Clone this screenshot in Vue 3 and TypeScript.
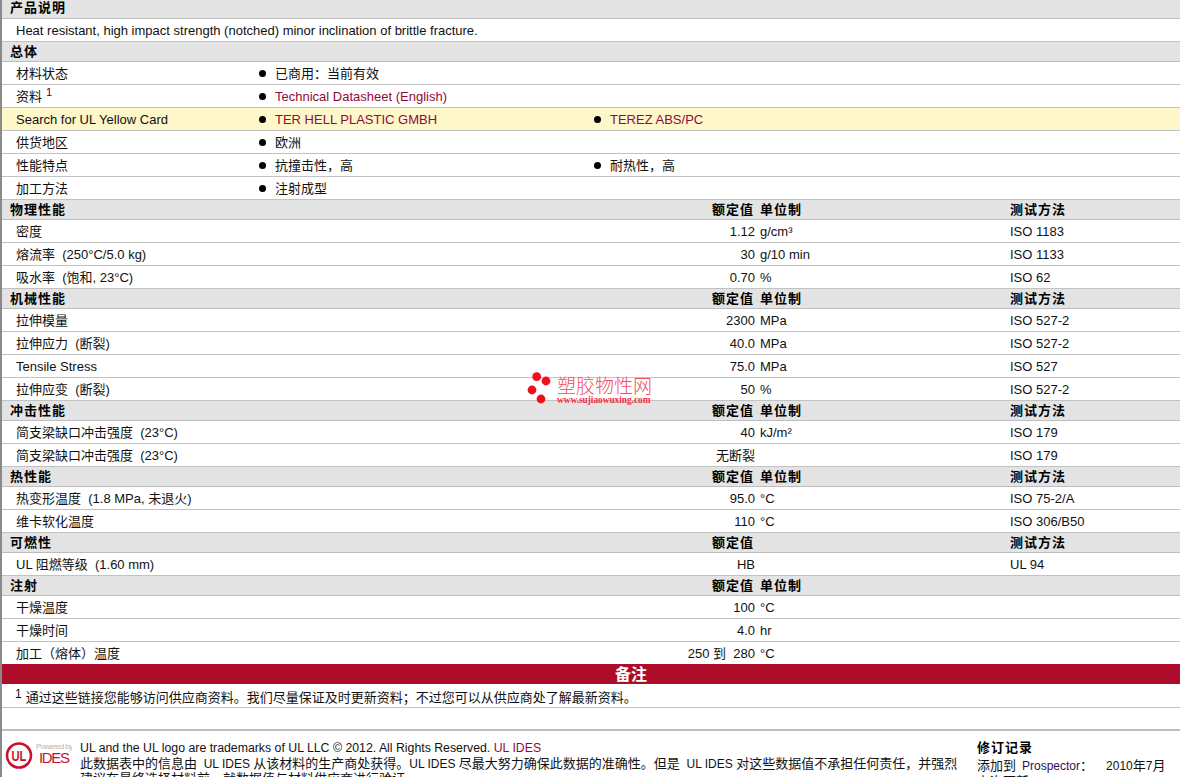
<script setup lang="ts">
interface Seg { t: string; zh: boolean }
interface Prop { label: string; value: string; unit?: string; method?: string }
interface Section { title: string; unit: boolean; method: boolean; rows: Prop[] }
interface Info { label: string; sup?: boolean; items: { text: string; link?: boolean }[]; hl?: boolean }

function seg(s: string): Seg[] {
  const out: Seg[] = []
  const re = /[\u3000-\u303f\u4e00-\u9fff\uff00-\uffef]+|[^\u3000-\u303f\u4e00-\u9fff\uff00-\uffef]+/g
  for (const m of s.match(re) ?? []) {
    out.push({ t: m, zh: /[\u3000-\u303f\u4e00-\u9fff\uff00-\uffef]/.test(m) })
  }
  return out
}

const infos: Info[] = [
  { label: '材料状态', items: [{ text: '已商用：当前有效' }] },
  { label: '资料', sup: true, items: [{ text: 'Technical Datasheet (English)', link: true }] },
  { label: 'Search for UL Yellow Card', hl: true, items: [{ text: 'TER HELL PLASTIC GMBH', link: true }, { text: 'TEREZ ABS/PC', link: true }] },
  { label: '供货地区', items: [{ text: '欧洲' }] },
  { label: '性能特点', items: [{ text: '抗撞击性，高' }, { text: '耐热性，高' }] },
  { label: '加工方法', items: [{ text: '注射成型' }] }
]

const sections: Section[] = [
  { title: '物理性能', unit: true, method: true, rows: [
    { label: '密度', value: '1.12', unit: 'g/cm³', method: 'ISO 1183' },
    { label: '熔流率  (250°C/5.0 kg)', value: '30', unit: 'g/10 min', method: 'ISO 1133' },
    { label: '吸水率  (饱和, 23°C)', value: '0.70', unit: '%', method: 'ISO 62' }
  ] },
  { title: '机械性能', unit: true, method: true, rows: [
    { label: '拉伸模量', value: '2300', unit: 'MPa', method: 'ISO 527-2' },
    { label: '拉伸应力  (断裂)', value: '40.0', unit: 'MPa', method: 'ISO 527-2' },
    { label: 'Tensile Stress', value: '75.0', unit: 'MPa', method: 'ISO 527' },
    { label: '拉伸应变  (断裂)', value: '50', unit: '%', method: 'ISO 527-2' }
  ] },
  { title: '冲击性能', unit: true, method: true, rows: [
    { label: '简支梁缺口冲击强度  (23°C)', value: '40', unit: 'kJ/m²', method: 'ISO 179' },
    { label: '简支梁缺口冲击强度  (23°C)', value: '无断裂', method: 'ISO 179' }
  ] },
  { title: '热性能', unit: true, method: true, rows: [
    { label: '热变形温度  (1.8 MPa, 未退火)', value: '95.0', unit: '°C', method: 'ISO 75-2/A' },
    { label: '维卡软化温度', value: '110', unit: '°C', method: 'ISO 306/B50' }
  ] },
  { title: '可燃性', unit: false, method: true, rows: [
    { label: 'UL 阻燃等级  (1.60 mm)', value: 'HB', method: 'UL 94' }
  ] },
  { title: '注射', unit: true, method: false, rows: [
    { label: '干燥温度', value: '100', unit: '°C' },
    { label: '干燥时间', value: '4.0', unit: 'hr' },
    { label: '加工（熔体）温度', value: '250 到  280', unit: '°C' }
  ] }
]

const footLine2 = '此数据表中的信息由  UL IDES 从该材料的生产商处获得。UL IDES 尽最大努力确保此数据的准确性。但是  UL IDES 对这些数据值不承担任何责任，并强烈'
const footLine3 = '建议在最终选择材料前，就数据值与材料供应商进行验证。'
const note = '通过这些链接您能够访问供应商资料。我们尽量保证及时更新资料；不过您可以从供应商处了解最新资料。'
</script>

<template>
  <div class="page">
    <div class="head first"><span class="b">产品说明</span></div>
    <div class="row desc"><span>Heat resistant, high impact strength (notched) minor inclination of brittle fracture.</span></div>

    <div class="head"><span class="b">总体</span></div>
    <div v-for="info in infos" :key="info.label" class="row info" :class="{ hl: info.hl }">
      <div class="info-label">{{ info.label }}<sup v-if="info.sup" class="ref">1</sup></div>
      <div v-for="item in info.items" :key="item.text" class="info-item">
        <i class="dot"></i>
        <span :class="{ link: item.link }">{{ item.text }}</span>
      </div>
    </div>

    <template v-for="sec in sections" :key="sec.title">
      <div class="head prop">
        <span class="b">{{ sec.title }}</span>
        <span class="b val">额定值</span>
        <span class="b unit">{{ sec.unit ? '单位制' : '' }}</span>
        <span class="b">{{ sec.method ? '测试方法' : '' }}</span>
      </div>
      <div v-for="(r, ri) in sec.rows" :key="ri" class="row prop">
        <span>{{ r.label }}</span>
        <span class="val">{{ r.value }}</span>
        <span class="unit">{{ r.unit }}</span>
        <span>{{ r.method }}</span>
      </div>
    </template>

    <div class="band">备注</div>
    <div class="row note"><div><sup class="note-ref">1</sup>{{ note }}</div></div>
    <div class="row empty"></div>

    <footer class="foot">
      <svg class="logo" width="70" height="30" viewBox="0 0 70 30">
        <circle cx="17" cy="13.5" r="12" fill="none" stroke="#c8102e" stroke-width="2.6" />
        <text x="17" y="19" text-anchor="middle" font-family="Liberation Sans" font-size="15" font-weight="700" fill="#c8102e" textLength="15" lengthAdjust="spacingAndGlyphs">UL</text>
        <text x="34" y="7" font-family="Liberation Sans" font-size="8" fill="#b5b5b5" textLength="37">Powered by</text>
        <text x="37" y="21" font-family="Liberation Sans" font-size="15" fill="#c8102e" textLength="31">IDES</text>
      </svg>
      <div class="foot-main">
        <div class="fl first-line">UL and the UL logo are trademarks of UL LLC © 2012. All Rights Reserved. <span class="link">UL IDES</span></div>
        <div class="fl"><span v-for="(s, i) in seg(footLine2)" :key="i" :class="{ zh: s.zh }">{{ s.t }}</span></div>
        <div class="fl zh">{{ footLine3 }}</div>
      </div>
      <div class="foot-side">
        <div class="fl zh b side-title">修订记录</div>
        <div class="fl side-line"><span class="zh">添加到</span><span class="g1">Prospector</span><span class="zh">：</span><span class="g2">2010</span><span class="zh">年</span>7<span class="zh">月</span></div>
        <div class="fl side-line"><span class="zh">上次更新：</span><span class="g3">2012/10/12</span></div>
      </div>
    </footer>

    <div class="mark" aria-hidden="true">
      <svg width="28" height="36" viewBox="0 0 28 36">
        <circle cx="11.7" cy="6.7" r="4.4" fill="#f0101c" />
        <circle cx="21" cy="11" r="4.4" fill="#f0101c" />
        <circle cx="7" cy="20" r="4.4" fill="#f0101c" />
        <circle cx="16" cy="29" r="4.4" fill="#f0101c" />
      </svg>
      <div class="mark-text">
        <div class="mark-zh">塑胶物性网</div>
        <div class="mark-en">www.sujiaowuxing.com</div>
      </div>
    </div>
  </div>
</template>

<style scoped>
.page {
  position: relative;
  height: 777px;
  overflow: hidden;
  box-sizing: border-box;
  border-left: 2px solid #8a8a8a;
  background: #fff;
  color: #111;
  font-family: "Liberation Sans", "Noto Sans CJK SC", sans-serif;
  font-size: 13px;
  line-height: 15px;
}
.b { font-weight: 700; color: #000; letter-spacing: 1px; }
.link { color: #8f0a3c; }
.head {
  display: flex;
  align-items: center;
  box-sizing: border-box;
  height: 20px;
  padding-left: 8px;
  border-bottom: 1px solid #bdbdbd;
  background-color: #e3e3e3;
  background-image: conic-gradient(#e7e7e7 25%, #e0e0e0 0 50%, #e7e7e7 0 75%, #e0e0e0 0);
  background-size: 2px 2px;
}
.head.first { height: 19px; padding-bottom: 3px; }
.row {
  display: flex;
  align-items: center;
  box-sizing: border-box;
  height: 23px;
  border-bottom: 1px solid #c2c2c2;
  white-space: pre;
}
.desc { padding-left: 14px; }
.info-label { width: 257px; padding-left: 14px; box-sizing: border-box; }
.info-item { display: flex; align-items: center; width: 335px; }
.dot { width: 7px; height: 7px; border-radius: 50%; background: #000; margin-right: 9px; flex: none; }
.hl { background: #fdf7c9; }
.ref { font-size: 11px; line-height: 0; vertical-align: 5px; margin-left: 4px; color: #40005a; }
.prop { display: grid; }
.head.prop { grid-template-columns: 702px 41px 257px 1fr; padding-left: 8px; padding-bottom: 1px; }
.row.prop { grid-template-columns: 639px 100px 255px 1fr; padding-left: 14px; }
.val { text-align: right; }
.head.prop .val { white-space: nowrap; }
.unit { padding-left: 5px; }
.head.prop .unit { padding-left: 7px; }
.band {
  position: relative;
  height: 20px;
  margin-top: -1px;
  box-sizing: border-box;
  padding-left: 80px;
  text-align: center;
  color: #fff;
  font-family: "Noto Sans CJK SC", sans-serif;
  font-size: 16px;
  font-weight: 700;
  line-height: 19px;
  background-color: #b10b28;
  background-image: conic-gradient(#b80d2a 25%, #a90926 0 50%, #b80d2a 0 75%, #a90926 0);
  background-size: 2px 2px;
}
.note { padding-left: 13px; padding-top: 3px; height: 24px; }
.note-ref { font-size: 12px; line-height: 0; vertical-align: 4px; margin-right: 4px; }
.empty { border-bottom: 2px solid #bdbdbd; }
.foot { display: flex; padding-top: 10px; font-size: 12px; }
.zh { font-size: 13px; }
.logo { flex: none; margin-top: 1px; margin-right: 8px; width: 70px; }
.foot-main { width: 897px; flex: none; }
.fl { height: 15px; line-height: 15px; white-space: pre; }
.first-line { font-size: 12.3px; }
.foot-side { width: 200px; flex: none; margin-top: -1px; }
.side-title { height: 18px; }
.side-line { height: 16px; line-height: 16px; }
.g1 { margin-left: 6px; color: #301060; }
.g2 { margin-left: 13px; }
.g3 { margin-left: 8px; }
.mark {
  position: absolute;
  left: 523px;
  top: 370px;
  display: flex;
  gap: 4px;
  pointer-events: none;
}
.mark-text { margin-top: 4px; }
.mark-zh { font-family: "Noto Sans CJK SC", sans-serif; font-size: 19px; font-weight: 300; line-height: 21px; color: #f0505f; }
.mark-en { font-family: "Liberation Serif", serif; font-size: 9.3px; font-weight: 700; line-height: 10px; color: #f03040; }
</style>

<style>
html, body { margin: 0; height: 777px; overflow: hidden; background: #fff; }
</style>
